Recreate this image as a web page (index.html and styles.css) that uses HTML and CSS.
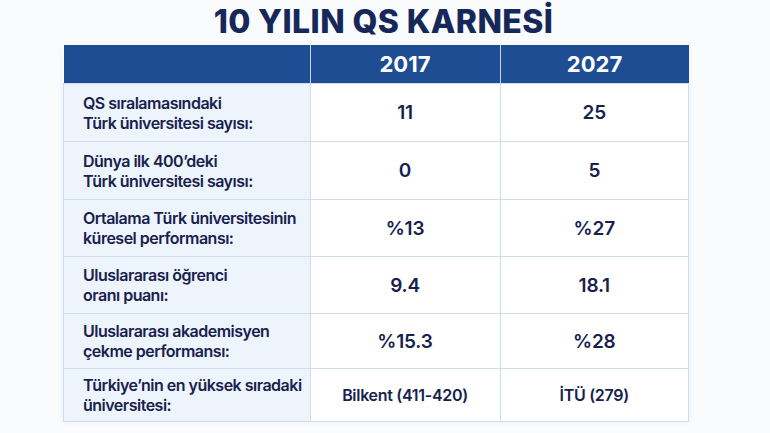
FILE: index.html
```html
<!DOCTYPE html>
<html lang="tr">
<head>
<meta charset="utf-8">
<link rel="stylesheet" href="styles.css">
</head>
<body>
<div class="page">
  <h1 class="title">10 YILIN QS KARNESİ</h1>
  <table class="card">
    <thead>
      <tr><th class="blank"></th><th>2017</th><th>2027</th></tr>
    </thead>
    <tbody>
      <tr><td class="label">QS sıralamasındaki<br>Türk üniversitesi sayısı:</td><td>11</td><td>25</td></tr>
      <tr><td class="label">Dünya ilk 400’deki<br>Türk üniversitesi sayısı:</td><td>0</td><td>5</td></tr>
      <tr><td class="label">Ortalama Türk üniversitesinin<br>küresel performansı:</td><td>%13</td><td>%27</td></tr>
      <tr><td class="label">Uluslararası öğrenci<br>oranı puanı:</td><td>9.4</td><td>18.1</td></tr>
      <tr><td class="label">Uluslararası akademisyen<br>çekme performansı:</td><td>%15.3</td><td>%28</td></tr>
      <tr><td class="label">Türkiye’nin en yüksek sıradaki<br>üniversitesi:</td><td class="small">Bilkent (411-420)</td><td class="small">İTÜ (279)</td></tr>
    </tbody>
  </table>
</div>
</body>
</html>
```
FILE: styles.css
```css
html, body { margin: 0; padding: 0; }
body {
  width: 770px;
  height: 433px;
  background: #fafbfc;
  font-family: "Inter", "Noto Sans", sans-serif;
  color: #17214d;
  overflow: hidden;
}
.page {
  display: flex;
  flex-direction: column;
  align-items: flex-start;
}
.title {
  align-self: stretch;
  text-align: center;
  margin: 2px 3px 0 0;
  height: 43px;
  line-height: 40px;
  font-size: 32px;
  font-weight: 800;
  color: #16285a;
  letter-spacing: 0.4px;
}
.card {
  margin-left: 63px;
  border-collapse: collapse;
  width: 626px;
  background: #fff;
  box-shadow: 0 0 6px rgba(40, 60, 100, 0.06);
}
.card th {
  background: #1f4d94;
  color: #fff;
  height: 38px;
  font-size: 22px;
  font-weight: 700;
  border-right: 1px solid #c9d7ec;
  padding: 0;
}
.card th:last-child { border-right: none; }
.card th.blank { width: 246px; }
.card th:nth-child(2) { width: 189px; }
.card td {
  height: 56px;
  border: 1px solid #cfddf0;
  text-align: center;
  font-size: 19px;
  font-weight: 600;
  padding: 0;
  color: #17214d;
  letter-spacing: -0.2px;
}
.card tbody tr:nth-child(1) td,
.card tbody tr:nth-child(2) td { height: 57px; }
.card tbody tr:nth-child(5) td { height: 54px; }
.card tbody tr:nth-child(6) td { height: 52px; }
.card td.label {
  text-align: left;
  background: #eef4fc;
  font-size: 16px;
  font-weight: 600;
  line-height: 20px;
  letter-spacing: -0.5px;
  padding: 0 0 0 19px;
}
.card td.small { font-size: 16px; letter-spacing: -0.3px; }
```
